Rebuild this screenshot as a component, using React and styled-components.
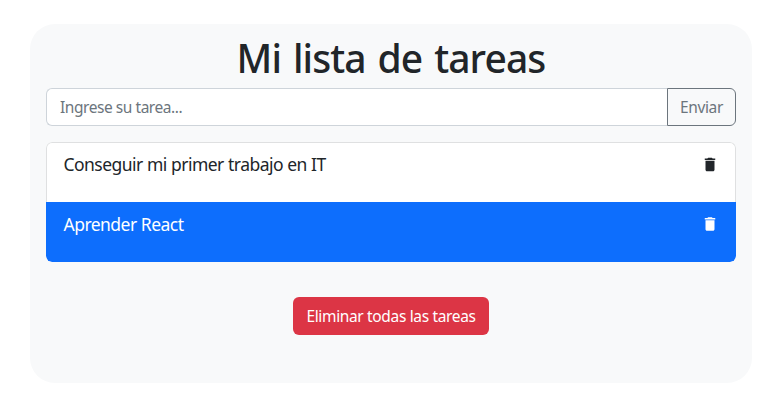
import React from "react";
import styled, { createGlobalStyle } from "styled-components";
import { MdDelete } from "react-icons/md";

const GlobalStyle = createGlobalStyle`
  *, *::before, *::after { box-sizing: border-box; }
  body {
    margin: 0;
    background: #fff;
    color: #212529;
    font-family: "Segoe UI", "Noto Sans", "Open Sans", sans-serif;
    font-size: 16px;
    line-height: 24px;
  }
`;

const Card = styled.main`
  width: 722px;
  height: 359px;
  margin: 24px 0 0 30px;
  padding: 10px 16px 0;
  border-radius: 25px;
  background: #f8f9fa;
  display: flex;
  flex-direction: column;
  align-items: center;
`;

const Title = styled.h1`
  margin: 0 0 6px;
  font-size: 39px;
  font-weight: 500;
  line-height: 48px;
  letter-spacing: -0.9px;
  word-spacing: 2.6px;
  white-space: nowrap;
`;

const InputGroup = styled.form`
  display: flex;
  width: 100%;
  height: 38px;
  margin-bottom: 16px;
`;

const TaskInput = styled.input`
  flex: 1;
  min-width: 0;
  padding: 6px 12px 6px 13px;
  border: 1px solid #ced4da;
  border-right: 0;
  border-radius: 6px 0 0 6px;
  background: #fff;
  font: inherit;
  font-size: 15.5px;
  letter-spacing: -0.45px;
  outline: none;
  &::placeholder { color: #6c757d; opacity: 1; }
`;

const SubmitButton = styled.button`
  width: 69px;
  padding: 0;
  border: 1px solid #6c757d;
  border-radius: 0 6px 6px 0;
  background: transparent;
  color: #6c757d;
  font: inherit;
  font-size: 15.5px;
  letter-spacing: -0.4px;
`;

const TaskList = styled.ul`
  width: 100%;
  margin: 0 0 35px;
  padding: 0;
  list-style: none;
  border-radius: 6px;
  overflow: hidden;
`;

const TaskItem = styled.li`
  display: flex;
  justify-content: space-between;
  align-items: flex-start;
  height: 60px;
  padding: ${(p) => (p.$active ? "9px 17px" : "8px 16px")};
  border: ${(p) => (p.$active ? "0" : "1px solid #dfe0e1")};
  border-bottom: 0;
  border-radius: ${(p) => (p.$active ? "0 0 6px 6px" : "6px 6px 0 0")};
  background: ${(p) => (p.$active ? "#0d6efd" : "#fff")};
  color: ${(p) => (p.$active ? "#fff" : "#212529")};
`;

const TaskText = styled.span`
  font-size: 17.5px;
  line-height: 27px;
  letter-spacing: -0.53px;
  word-spacing: 0.2px;
  padding-left: 0.5px;
`;

const DeleteIcon = styled(MdDelete)`
  width: 18px;
  height: 18px;
  margin-top: 4px;
  transform: translateY(${(p) => (p.$active ? "0" : "0.5px")});
`;

const ClearButton = styled.button`
  width: 196px;
  height: 38px;
  padding: 0;
  border: 0;
  border-radius: 6px;
  background: #dc3545;
  color: #fff;
  font: inherit;
  font-size: 15.5px;
  letter-spacing: -0.35px;
`;

const tasks = [
  { text: "Conseguir mi primer trabajo en IT", done: false },
  { text: "Aprender React", done: true },
];

export default function App() {
  return (
    <>
      <GlobalStyle />
      <Card>
        <Title>Mi lista de tareas</Title>
        <InputGroup>
          <TaskInput placeholder="Ingrese su tarea..." />
          <SubmitButton type="button">Enviar</SubmitButton>
        </InputGroup>
        <TaskList>
          {tasks.map((task) => (
            <TaskItem key={task.text} $active={task.done}>
              <TaskText>{task.text}</TaskText>
              <DeleteIcon $active={task.done} />
            </TaskItem>
          ))}
        </TaskList>
        <ClearButton type="button">Eliminar todas las tareas</ClearButton>
      </Card>
    </>
  );
}
